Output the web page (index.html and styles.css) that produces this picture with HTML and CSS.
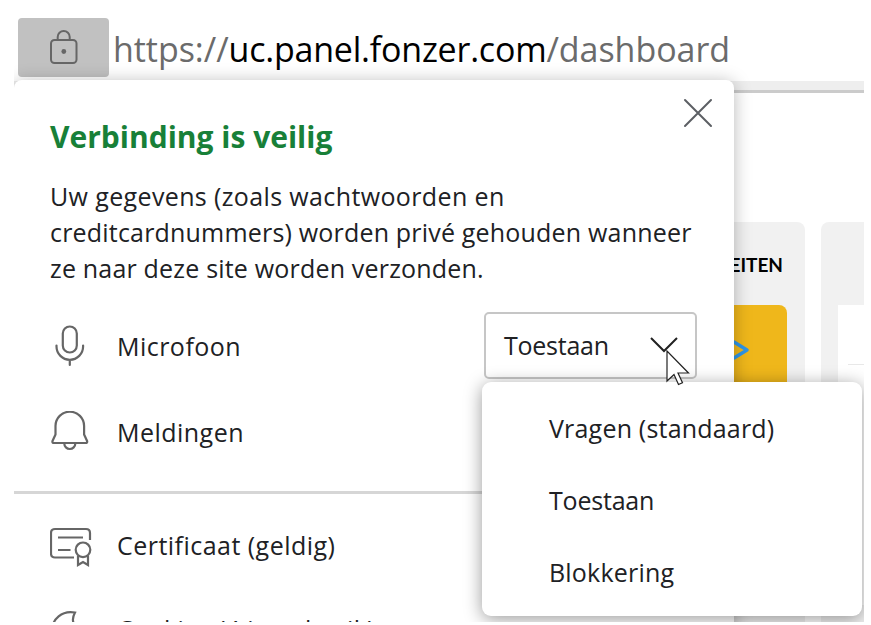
FILE: index.html
```html
<!DOCTYPE html>
<html lang="nl">
<head>
    <meta charset="UTF-8">
    <meta name="viewport" content="width=device-width, initial-scale=1.0">
    <title>Verbinding is veilig</title>
    <link rel="stylesheet" href="styles.css">
</head>
<body>
    <div class="window">
        <header class="address-bar">
            <div class="lock">
                <svg width="30" height="36" viewBox="0 0 30 36" fill="none" stroke="#666" stroke-width="2">
                    <rect x="2" y="10" width="25.500" height="23" rx="3.500"/>
                    <path d="M8.700 10V7a6 6 0 0 1 12 0v3"/>
                    <circle cx="14.800" cy="21.500" r="2.400" fill="#666" stroke="none"/>
                </svg>
            </div>
            <div class="url">https://<span class="host">uc.panel.fonzer.com</span>/dashboard</div>
        </header>

        <main class="page">
            <section class="card card-left">
                <h2 class="card-title">ACTIVITEITEN</h2>
                <div class="tile">
                    <svg width="20" height="24" viewBox="0 0 20 24" fill="none" stroke="#2f96e8" stroke-width="3.500" stroke-linecap="round" stroke-linejoin="round">
                        <path d="M3 4l13 8-13 8"/>
                    </svg>
                </div>
            </section>
            <section class="card card-right">
                <div class="panel"><div class="panel-line"></div></div>
            </section>
        </main>

        <div class="popup">
            <button class="close" aria-label="Sluiten">
                <svg width="30" height="30" viewBox="0 0 30 30" fill="none" stroke="#5c5f64" stroke-width="2" stroke-linecap="round">
                    <path d="M2 2l26 26M28 2L2 28"/>
                </svg>
            </button>
            <h1 class="title">Verbinding is veilig</h1>
            <p class="description"><span class="wide">Uw gegevens (zoals wachtwoorden en</span><br>creditcardnummers) worden privé gehouden wanneer<br>ze naar deze site worden verzonden.</p>

            <div class="row row-mic">
                <svg class="icon" width="42" height="42" viewBox="0 0 42 42" fill="none" stroke="#666" stroke-width="2.200" stroke-linecap="round">
                    <rect x="12.800" y="1.500" width="14" height="26" rx="7"/>
                    <path d="M6.500 20.500v1a13.300 13.300 0 0 0 26.600 0v-1M19.800 35v5"/>
                </svg>
                <span class="label">Microfoon</span>
                <div class="select">
                    <span class="value">Toestaan</span>
                    <svg width="28" height="16" viewBox="0 0 28 16" fill="none" stroke="#222" stroke-width="2">
                        <path d="M1 1l13 13L27 1"/>
                    </svg>
                </div>
            </div>
            <div class="row row-bell">
                <svg class="icon" width="42" height="42" viewBox="0 0 42 42" fill="none" stroke="#666" stroke-width="2.200" stroke-linejoin="round">
                    <path d="M5.500 15a14.300 14.300 0 0 1 28.600 0v8.500l3 6.500q.5 2-1.500 2H4q-2 0-1.500-2l3-6.500z"/>
                    <path d="M14.300 32.500a5.500 5.500 0 0 0 11 0"/>
                </svg>
                <span class="label">Meldingen</span>
            </div>
            <hr class="divider">
            <div class="row row-cert">
                <svg class="icon" width="42" height="42" viewBox="0 0 42 42" fill="none" stroke="#666" stroke-width="2.200">
                    <path d="M24 31.500H5q-4 0-4-4V7q0-4 4-4h31q4 0 4 4v7"/>
                    <path d="M8 11.500h25M8 24h12.500"/>
                    <circle cx="33" cy="23.800" r="7.300"/>
                    <path d="M28 30v9l5-3 5 3v-9"/>
                </svg>
                <span class="label">Certificaat (geldig)</span>
            </div>
            <div class="row row-cookie">
                <svg class="icon" width="42" height="42" viewBox="0 0 42 42" fill="none" stroke="#666" stroke-width="2.200">
                    <path d="M25 2.500C12 0 2 9 2 21s8 18 18 18 18-8 18-16c-6 2-9-3-8-7-7 1-9-6-5-13.500z"/>
                </svg>
                <span class="label">Cookies (4 in gebruik)</span>
            </div>
        </div>

        <ul class="menu">
            <li>Vragen (standaard)</li>
            <li class="selected">Toestaan</li>
            <li>Blokkering</li>
        </ul>

        <svg class="cursor" width="25" height="37" viewBox="0 0 25 37" fill="#fff" stroke="#222" stroke-width="1.200">
            <path d="M1 1v30l7-6.500 4.500 10 4-1.700-4.500-9.800h10.500z"/>
        </svg>
    </div>
</body>
</html>
```

FILE: styles.css
```css
* {
    box-sizing: border-box;
}

body {
    margin: 0;
    background: #fff;
    color: #202124;
    font-family: "Open Sans", "Noto Sans", sans-serif;
    font-size: 25px;
}

.window {
    position: relative;
    width: 850px;
    height: 622px;
    margin-left: 14px;
    overflow: hidden;
}

.address-bar {
    display: flex;
    align-items: flex-start;
    height: 93px;
    padding: 18px 0 0 4px;
    border-bottom: 3px solid #cbcbcb;
    background: linear-gradient(#fff 81px, #eee 81px);
}

.lock {
    display: flex;
    justify-content: center;
    align-items: center;
    width: 91px;
    height: 59px;
    border-radius: 4px;
    background: #c1c1c1;
}

.url {
    margin-left: 4px;
    color: #6b6b6b;
    font-size: 34px;
    letter-spacing: -0.05px;
    line-height: 62px;
    white-space: nowrap;
}

.host {
    color: #000;
    letter-spacing: -0.22px;
}

.page {
    display: flex;
    gap: 16px;
    height: 529px;
    padding: 129px 0 0 591px;
}

.card {
    flex: none;
    border-radius: 8px 8px 0 0;
    background: #f1f1f1;
}

.card-left {
    width: 200px;
    padding: 31px 18px 0 0;
}

.card-right {
    width: 60px;
    padding: 83px 0 0 17px;
}

.card-title {
    margin: 0;
    padding-right: 4px;
    color: #000;
    font: bold 19px/24px Lato, sans-serif;
    text-align: right;
}

.tile {
    display: flex;
    justify-content: flex-end;
    height: 300px;
    margin-top: 28px;
    padding: 33px 36px 0 0;
    border-radius: 0 8px 0 0;
    background: #efb71b;
}

.panel {
    height: 300px;
    padding: 59px 0 0 10px;
    background: #fff;
}

.panel-line {
    height: 1px;
    background: #e8e8e8;
}

.popup {
    position: absolute;
    top: 80px;
    left: 0;
    width: 720px;
    height: 560px;
    padding: 36px 0 0 36px;
    border-radius: 8px;
    background: #fff;
    box-shadow: 0 2px 18px rgba(0, 0, 0, 0.28);
}

.close {
    position: absolute;
    top: 18px;
    right: 21px;
    display: flex;
    padding: 0;
    border: 0;
    background: none;
}

.title {
    margin: 0;
    color: #188038;
    font-size: 30px;
    line-height: 42px;
}

.description {
    margin: 20px 0 0;
    letter-spacing: 0.19px;
    line-height: 36px;
    white-space: nowrap;
}

.wide {
    letter-spacing: 0.37px;
}

.row {
    display: flex;
    align-items: center;
    height: 68px;
}

.row-mic {
    margin-top: 26px;
}

.row-bell {
    margin-top: 18px;
}

.icon {
    flex: none;
}

.label {
    margin-left: 25px;
    letter-spacing: 0.47px;
    white-space: nowrap;
}

.select {
    display: flex;
    justify-content: space-between;
    align-items: center;
    width: 213px;
    height: 67px;
    margin: 0 37px 2px auto;
    padding: 0 17px 0 18px;
    border: 2px solid #c6c6c6;
    border-radius: 5px;
}

.value {
    letter-spacing: -0.25px;
}

.divider {
    height: 3px;
    margin: 25px 0 0 -36px;
    border: 0;
    background: #d6d6d6;
}

.row-cert {
    height: 66px;
    margin-top: 18px;
}

.row-cert .icon {
    margin-top: 3px;
}

.row-cookie {
    align-items: flex-start;
    margin-top: 32px;
}

.row-cookie .label {
    margin-top: 2px;
    letter-spacing: 0.4px;
    line-height: 34px;
}

.menu {
    position: absolute;
    top: 382px;
    left: 468px;
    width: 380px;
    height: 234px;
    margin: 0;
    padding: 10px 0 0 67px;
    border-radius: 9px;
    background: #fff;
    box-shadow: 0 3px 18px rgba(0, 0, 0, 0.4);
    letter-spacing: 0.2px;
    list-style: none;
    line-height: 72px;
}

.selected {
    letter-spacing: -0.2px;
}

.cursor {
    position: absolute;
    top: 350px;
    left: 652px;
}
```
